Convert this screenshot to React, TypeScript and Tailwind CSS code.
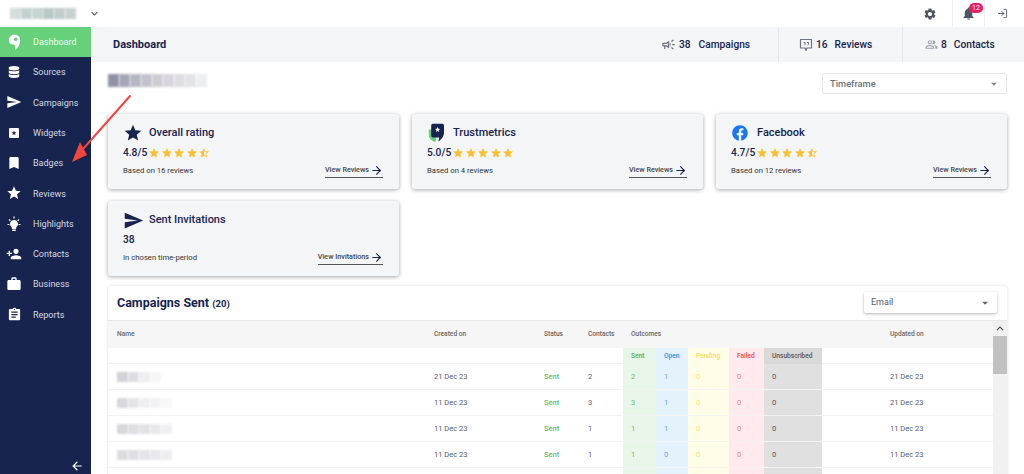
import React from "react";
import {
  MdSend,
  MdBookmark,
  MdStar,
  MdStarHalf,
  MdPersonAdd,
  MdWork,
  MdAssignment,
  MdArrowBack,
  MdSettings,
  MdNotifications,
  MdKeyboardArrowDown,
  MdKeyboardArrowUp,
  MdArrowDropDown,
  MdOutlineCampaign,
  MdOutlinePeopleAlt,
} from "react-icons/md";
import { FaFacebook, FaDatabase } from "react-icons/fa";
import { ArrowRight, LogIn } from "lucide-react";

const WidgetIcon = () => (
  <svg width="16" height="16" viewBox="0 0 16 16">
    <rect x="3" y="3" width="10" height="10" rx="1" fill="#fff" />
    <path d="M8 5.6l.7 1.6 1.7.1-1.3 1.1.5 1.7L8 9.2l-1.6.9.5-1.7-1.3-1.1 1.7-.1z" fill="#16244f" />
  </svg>
);

const BulbIcon = () => (
  <svg width="18" height="18" viewBox="0 0 18 18" fill="#fff">
    <path d="M9 5a4 4 0 0 0-2.2 7.3V14h4.4v-1.7A4 4 0 0 0 9 5z" />
    <rect x="7.2" y="14.6" width="3.6" height="1.4" rx=".5" />
    <path d="M9 1.5v2M2.5 9.5h2M13.5 9.5h2M4 4.5l1.4 1.4M14 4.5l-1.4 1.4" stroke="#fff" strokeWidth="1.2" />
  </svg>
);

const LogoIcon = () => (
  <svg width="16" height="20" viewBox="0 0 20 25" className="-ml-[3px]">
    <path d="M1 8h4v9h6l-2 7c-3-1-8-4-8-9z" fill="#66d17a" />
    <path d="M4 3a2 2 0 0 1 2-2h12a2 2 0 0 1 2 2v9c0 5-3 9-7 11l1-5H6a2 2 0 0 1-2-2z" fill="#16244f" />
    <path d="M12 5l1 2.2 2.3.2-1.8 1.5.6 2.3-2.1-1.2-2.1 1.2.6-2.3-1.8-1.5 2.3-.2z" fill="#fff" />
  </svg>
);

const SidebarLogo = () => (
  <svg width="13" height="17" viewBox="0 0 16 21">
    <path d="M1 7.5C1 3.5 4 1 8 1s7 2.5 7 6.500c0 5.500-3 10-6.500 12.500l.5-6.500C4.500 13.500 1 12 1 7.500z" fill="#fff" />
    <circle cx="9.500" cy="6.500" r="2.200" fill="#66d17a" />
  </svg>
);

const ReviewsIcon = () => (
  <svg width="14" height="14" viewBox="0 0 14 14" fill="none">
    <path d="M1.5 1.500h11v8.500H8L7 12.500 6 10H1.500z" stroke="#6b7280" strokeWidth="1.200" strokeLinejoin="round" />
    <path d="M4.500 4.500h1.700v1.800l-.8 1M7.800 4.500h1.700v1.800l-.8 1" stroke="#6b7280" strokeWidth="1" />
  </svg>
);

const navItems: { label: string; icon: React.ReactNode }[] = [
  { label: "Sources", icon: <FaDatabase size={12} /> },
  { label: "Campaigns", icon: <MdSend size={16} /> },
  { label: "Widgets", icon: <WidgetIcon /> },
  { label: "Badges", icon: <MdBookmark size={16} /> },
  { label: "Reviews", icon: <MdStar size={16} /> },
  { label: "Highlights", icon: <BulbIcon /> },
  { label: "Contacts", icon: <MdPersonAdd size={16} /> },
  { label: "Business", icon: <MdWork size={16} /> },
  { label: "Reports", icon: <MdAssignment size={15} /> },
];

const Stars = ({ half }: { half?: boolean }) => (
  <span className="flex items-center gap-[0.5px] text-[#fbc02d]">
    <MdStar size={12} />
    <MdStar size={12} />
    <MdStar size={12} />
    <MdStar size={12} />
    {half ? <MdStarHalf size={12} /> : <MdStar size={12} />}
  </span>
);

const Blur = ({ shades, h = "h-[13px]" }: { shades: string[]; h?: string }) => (
  <div className={`flex ${h}`}>
    {shades.map((c, i) => (
      <div key={i} className="w-[11px] blur-[1px]" style={{ background: c }} />
    ))}
  </div>
);

type CardProps = {
  icon: React.ReactNode;
  title: string;
  value: string;
  half?: boolean;
  showStars?: boolean;
  note: string;
  link: string;
};

const StatCard = ({ icon, title, value, half, showStars = true, note, link }: CardProps) => (
  <div className="w-[291px] h-[75px] bg-[#f4f5f7] rounded-[3px] shadow-[0_1px_4px_rgba(0,0,0,0.35)] pl-[6px] pr-[16px] pt-[9px]">
    <div className="flex items-center h-[20px]">
      <div className="w-[35px] pl-[3px] flex justify-center">{icon}</div>
      <span className="text-[11px] font-medium text-[#16244f]">{title}</span>
    </div>
    <div className="flex items-center gap-[1px] h-[16px] mt-[2px] pl-[9px]">
      <span className="text-[10.2px] font-medium text-[#16244f]">{value}</span>
      {showStars && <Stars half={half} />}
    </div>
    <div className="flex items-center justify-between mt-[3px] pl-[9px]">
      <span className="text-[7.7px] text-[#333]">{note}</span>
      <span className="flex items-center gap-[1px] border-b border-[#555] text-[7.2px] font-medium text-[#444] h-[14px]">
        {link}
        <ArrowRight size={13} color="#16244f" />
      </span>
    </div>
  </div>
);

const gridCols = "grid grid-cols-[318px_118px_44px_35px_33px_32px_41px_35px_58px_171px]";

const rows = [
  { created: "21 Dec 23", contacts: 2, o: [2, 1, 0, 0, 0], updated: "21 Dec 23", blur: ["#d2d2d8", "#dedee2", "#eeeef0", "#f6f6f7"] },
  { created: "11 Dec 23", contacts: 3, o: [3, 1, 0, 0, 0], updated: "21 Dec 23", blur: ["#d8d8dc", "#e4e4e8", "#eeeef0", "#f2f2f4", "#f8f8f9"] },
  { created: "11 Dec 23", contacts: 1, o: [1, 1, 0, 0, 0], updated: "11 Dec 23", blur: ["#d8d8dc", "#dedee2", "#e2e2e6", "#e8e8ea", "#f0f0f2"] },
  { created: "11 Dec 23", contacts: 1, o: [1, 0, 0, 0, 0], updated: "11 Dec 23", blur: ["#dcdce0", "#e0e0e4", "#e4e4e8", "#e8e8ea", "#eeeef0"] },
  { created: "", contacts: "", o: ["", "", "", "", ""], updated: "", blur: [] },
];

const outcomeCell = [
  "bg-[#e8f5e9] text-[#66bb6a]",
  "bg-[#e3f2fd] text-[#64a8e8]",
  "bg-[#fffde7] text-[#f5e27a]",
  "bg-[#ffebee] text-[#ef7b7b]",
  "bg-[#e0e0e0] text-[#555]",
];

const outcomeHead = [
  { label: "Sent", cls: "bg-[#e8f5e9] text-[#4caf50]" },
  { label: "Open", cls: "bg-[#e3f2fd] text-[#2f8fe8]" },
  { label: "Pending", cls: "bg-[#fffde7] text-[#f2dc5d]" },
  { label: "Failed", cls: "bg-[#ffebee] text-[#ef4444]" },
  { label: "Unsubscribed", cls: "bg-[#d9d9d9] text-[#555]" },
];

export default function App() {
  return (
    <div className="relative w-[1024px] h-[474px] overflow-hidden bg-white font-['Roboto',sans-serif] flex flex-col">
      {/* top bar */}
      <div className="h-[27px] shrink-0 flex items-center">
        <div className="ml-[10px]">
          <Blur h="h-[11px]" shades={["#d4dcdc", "#c4d0d0", "#c8d4d0", "#b8c8c4", "#c0cccc", "#c8d0d0"]} />
        </div>
        <MdKeyboardArrowDown size={13} className="ml-[12px] text-[#555]" />
        <div className="ml-auto flex items-center h-full">
          <MdSettings size={14} className="text-[#4b5563] mr-[15px]" />
          <div className="relative w-[33px] h-full flex items-center justify-center border-x border-[#eeeeee]">
            <MdNotifications size={15} className="text-[#4b5563]" />
            <span className="absolute top-[3px] left-[16px] w-[14px] h-[10px] rounded-full bg-[#e91e63] text-white text-[7px] leading-[10px] text-center">12</span>
          </div>
          <LogIn size={11} className="text-[#4b5563] ml-[12px] mr-[16px]" />
        </div>
      </div>

      <div className="flex flex-1 min-h-0">
        {/* sidebar */}
        <aside className="w-[91px] shrink-0 bg-[#16244f] text-white flex flex-col relative">
          <div className="h-[30px] bg-[#66d17a] flex items-center">
            <div className="w-[28px] flex justify-center"><SidebarLogo /></div>
            <span className="ml-[5px] mt-[2px] text-[9px] text-[#eef9f0]">Dashboard</span>
          </div>
          {navItems.map((item) => (
            <div key={item.label} className="h-[30.3px] flex items-center">
              <div className="w-[28px] flex justify-center">{item.icon}</div>
              <span className="ml-[5px] mt-[2px] text-[9px] text-[#d6d9e3]">{item.label}</span>
            </div>
          ))}
          <MdArrowBack size={14} className="absolute right-[7px] bottom-[1px]" />
        </aside>

        <main className="flex-1 min-w-0 flex flex-col">
          {/* header band */}
          <div className="h-[35px] shrink-0 bg-[#f3f5f7] flex items-center">
            <span className="ml-[22px] mt-[2px] text-[11px] font-bold text-[#16244f]">Dashboard</span>
            <div className="ml-auto flex h-full text-[10.2px] font-medium text-[#16244f]">
              <div className="w-[129px] flex items-center gap-[3px] pl-[12px]">
                <MdOutlineCampaign size={15} className="text-[#6b7280]" />
                <span>38</span>
                <span className="ml-[5px]">Campaigns</span>
              </div>
              <div className="w-[124px] flex items-center gap-[3px] pl-[20px] border-l border-[#e5e7eb]">
                <ReviewsIcon />
                <span>16</span>
                <span className="ml-[4px]">Reviews</span>
              </div>
              <div className="w-[122px] flex items-center gap-[3px] pl-[22px] border-l border-[#e5e7eb]">
                <MdOutlinePeopleAlt size={13} className="text-[#9ca3af]" />
                <span>8</span>
                <span className="ml-[4px]">Contacts</span>
              </div>
            </div>
          </div>

          <div className="px-[17px] pt-[11px]">
            {/* heading row */}
            <div className="flex items-start justify-between h-[41px]">
              <div className="mt-[1px]">
                <Blur shades={["#8f92a6", "#a6a8b8", "#b4b6c4", "#c4c2cc", "#cfcdd4", "#d8d6dc", "#dedde2", "#e4e4e8", "#eceef0"]} />
              </div>
              <div className="w-[185px] h-[21px] bg-white border border-[#e5e7eb] rounded-[2px] flex items-center justify-between pl-[7px] pr-[5px]">
                <span className="text-[9.3px] font-medium text-[#6b7280] mt-[1px]">Timeframe</span>
                <MdArrowDropDown size={14} className="text-[#888]" />
              </div>
            </div>

            {/* cards */}
            <div className="flex flex-col gap-[12px]">
              <div className="flex gap-[13px]">
                <StatCard icon={<MdStar size={20} color="#16244f" />} title="Overall rating" value="4.8/5" half note="Based on 16 reviews" link="View Reviews" />
                <StatCard icon={<LogoIcon />} title="Trustmetrics" value="5.0/5" note="Based on 4 reviews" link="View Reviews" />
                <StatCard icon={<FaFacebook size={16} color="#1877f2" className="-ml-[3px]" />} title="Facebook" value="4.7/5" half note="Based on 12 reviews" link="View Reviews" />
              </div>
              <StatCard icon={<MdSend size={21} color="#16244f" />} title="Sent Invitations" value="38" showStars={false} note="In chosen time-period" link="View Invitations" />
            </div>

            {/* campaigns table */}
            <div className="mt-[10px] w-[899px] bg-white rounded-t-[3px] shadow-[0_0_3px_rgba(0,0,0,0.15)]">
              <div className="h-[35px] flex items-center justify-between pl-[9px] pr-[10px] border-b border-[#e5e7eb]">
                <span className="text-[12.5px] font-bold text-[#16244f]">
                  Campaigns Sent <span className="text-[9.5px]">(20)</span>
                </span>
                <div className="w-[133px] h-[21px] bg-white rounded-[2px] shadow-[0_1px_3px_rgba(0,0,0,0.3)] flex items-center justify-between pl-[7px] pr-[5px] mb-[1px]">
                  <span className="text-[9px] text-[#555b6e]">Email</span>
                  <MdArrowDropDown size={14} className="text-[#666]" />
                </div>
              </div>

              <div className="flex">
                <div className="w-[885px] text-[7.5px]">
                  <div className={`${gridCols} h-[27px] items-center bg-[#f6f6f6] text-[6.6px] font-medium text-[#666]`}>
                    <span className="pl-[9px]">Name</span>
                    <span className="pl-[8px]">Created on</span>
                    <span>Status</span>
                    <span>Contacts</span>
                    <span className="col-span-5 pl-[8px]">Outcomes</span>
                    <span className="pl-[68px]">Updated on</span>
                  </div>
                  <div className={`${gridCols} h-[16px] border-b border-[#eeeeee] text-[6.6px] font-medium`}>
                    <span className="col-span-4" />
                    {outcomeHead.map((h) => (
                      <span key={h.label} className={`${h.cls} pl-[8px] leading-[16px] whitespace-nowrap`}>{h.label}</span>
                    ))}
                    <span />
                  </div>
                  {rows.map((r, i) => (
                    <div key={i} className={`${gridCols} h-[26px] items-stretch border-b border-[#f3f3f3] text-[#555b6e]`}>
                      <span className="pl-[9px] flex items-center"><Blur h="h-[10px]" shades={r.blur} /></span>
                      <span className="pl-[8px] flex items-center">{r.created}</span>
                      <span className="flex items-center font-medium text-[#66bb6a]">{r.created && "Sent"}</span>
                      <span className="flex items-center">{r.contacts}</span>
                      {r.o.map((n, j) => (
                        <span key={j} className={`${outcomeCell[j]} pl-[8px] flex items-center`}>{n}</span>
                      ))}
                      <span className="pl-[68px] flex items-center">{r.updated}</span>
                    </div>
                  ))}
                </div>
                {/* scrollbar */}
                <div className="w-[14px] bg-[#f1f1f1] flex flex-col items-center">
                  <MdKeyboardArrowUp size={14} className="text-[#444] h-[15px]" />
                  <div className="w-full h-[38px] bg-[#c1c1c1]" />
                </div>
              </div>
            </div>
          </div>
        </main>
      </div>

      {/* red annotation arrow */}
      <svg className="absolute left-0 top-0 pointer-events-none" width="140" height="170" viewBox="0 0 140 170">
        <path d="M130 96L83 149" stroke="#f2453d" strokeWidth="2" strokeLinecap="round" />
        <path d="M72 162L80 142L87 155Z" fill="#f2453d" />
      </svg>
    </div>
  );
}
